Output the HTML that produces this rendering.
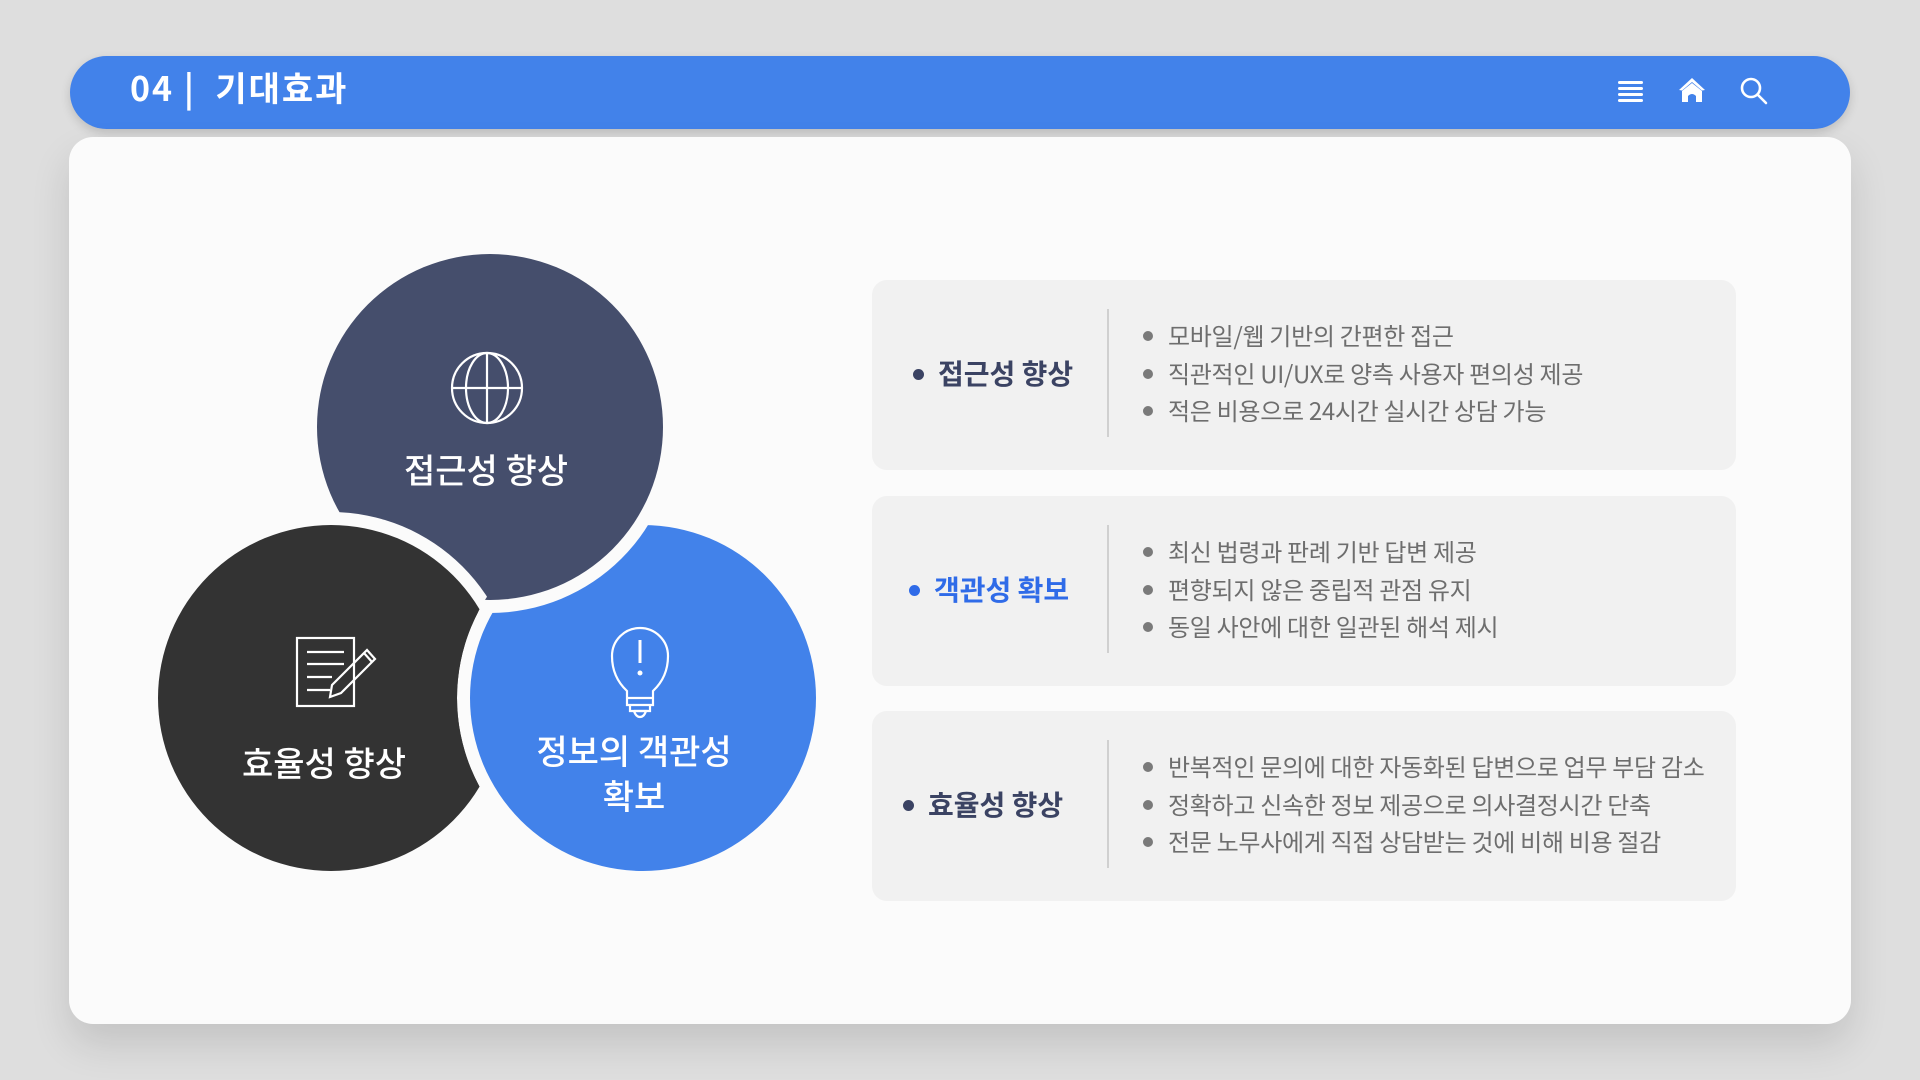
<!DOCTYPE html>
<html><head><meta charset="utf-8"><style>
*{margin:0;padding:0;box-sizing:border-box}
body{width:1920px;height:1080px;background:#dedede;font-family:"Liberation Sans","Noto Sans CJK KR",sans-serif;position:relative;overflow:hidden}
.hdr{position:absolute;left:70px;top:56px;width:1780px;height:73px;border-radius:37px;background:#4282ea;box-shadow:0 4px 10px rgba(0,0,0,.15)}
.hdr .t{position:absolute;left:60px;top:-6px;line-height:73px;color:#fff;font-size:34px;font-weight:bold;font-family:"Noto Sans CJK KR",sans-serif;letter-spacing:2px}
.card{position:absolute;left:69px;top:137px;width:1782px;height:887px;border-radius:24px;background:#fbfbfb;box-shadow:0 20px 40px rgba(0,0,0,.12)}
.ct{position:absolute;color:#fff;font-family:"Noto Sans CJK KR",sans-serif;font-size:34px;font-weight:500;text-align:center;line-height:45px}
.panel{position:absolute;left:872px;width:864px;height:190px;background:#f1f1f1;border-radius:15px}
.panel .div{position:absolute;left:235px;top:29px;width:2px;height:128px;background:#d0d0d0}
.panel .ti{position:absolute;top:-2px;line-height:190px;font-family:"Noto Sans CJK KR",sans-serif;font-weight:bold;font-size:28px;color:#3b4363}
.panel .ti:before{content:"";position:absolute;left:-25px;top:91px;width:11px;height:11px;border-radius:50%;background:currentColor}
.panel ul{position:absolute;left:296px;top:36px;list-style:none;font-family:"Noto Sans CJK KR",sans-serif;font-size:24px;color:#6e6e6e;letter-spacing:-0.3px}
.panel li{height:37.5px;line-height:37.5px;position:relative}
.panel li:before{content:"";position:absolute;left:-25px;top:15px;width:10px;height:10px;border-radius:50%;background:#7a7a7a}
</style></head><body>
<div class="hdr"><div class="t">04 | &nbsp;기대효과</div>
<svg style="position:absolute;left:1546px;top:20px" width="200" height="34" viewBox="0 0 200 34">
<g fill="#fff"><rect x="2" y="5" width="25" height="3" rx="1.5"/><rect x="2" y="11" width="25" height="3" rx="1.5"/><rect x="2" y="17" width="25" height="3" rx="1.5"/><rect x="2" y="23" width="25" height="3" rx="1.5"/>
<path d="M76 2 L63 14 L66 14.5 L76 6 L86 14.5 L89 14 Z"/><path d="M66 15 L76 7 L86 15 L86 26 L80 26 L80 20 Q76 16 72 20 L72 26 L66 26 Z"/></g>
<g fill="none" stroke="#fff" stroke-width="2.6"><circle cx="135" cy="12" r="9"/><path d="M141.5 18.5 L150 27" stroke-linecap="round"/></g>
</svg></div>
<div class="card"></div>
<svg style="position:absolute;left:0;top:0" width="900" height="1080">
<defs><mask id="m"><rect x="0" y="0" width="900" height="1080" fill="#fff"/><circle cx="643" cy="698" r="186" fill="#000"/></mask></defs>
<circle cx="331" cy="698" r="173" fill="#333333"/>
<circle cx="643" cy="698" r="186" fill="#fbfbfb"/>
<circle cx="643" cy="698" r="173" fill="#4282ea"/>
<circle cx="490" cy="427" r="186" fill="#fbfbfb"/>
<circle cx="490" cy="427" r="173" fill="#454e6c"/>
<g mask="url(#m)">
<circle cx="331" cy="698" r="186" fill="#fbfbfb"/>
<circle cx="331" cy="698" r="173" fill="#333333"/>
</g>
<g fill="none" stroke="#fff" stroke-width="2.2">
<circle cx="487" cy="388" r="35"/><ellipse cx="487" cy="388" rx="21" ry="35"/><path d="M487 353V423M452 388H522"/>
<rect x="297" y="638" width="57" height="68"/><path d="M307 652H344M307 664H344M307 677H332M307 690H330"/>
<path d="M332 685 L330 697 L341 693 L375 659 L367 650 Z M364 653 L372 662"/>
<path d="M627 691 Q612 677 612 656 A28 28 0 1 1 668 656 Q668 677 653 691 V698 H627 Z M627 698 H653 V705 H627 Z M630 705 H650 V711 H630 Z"/>
<path d="M634 711 H646 Q644 717 640 717 Q636 717 634 711"/>
</g>
<path d="M640 640V663" stroke="#fff" stroke-width="3"/><circle cx="640" cy="673" r="2.5" fill="#fff"/>
</svg>
<div class="ct" style="left:366px;top:446px;width:240px">접근성 향상</div>
<div class="ct" style="left:204px;top:739px;width:240px">효율성 향상</div>
<div class="ct" style="left:504px;top:727px;width:260px">정보의 객관성<br>확보</div>
<div class="panel" style="top:280px"><div class="ti" style="left:66px">접근성 향상</div><div class="div"></div>
<ul><li>모바일/웹 기반의 간편한 접근</li><li>직관적인 UI/UX로 양측 사용자 편의성 제공</li><li>적은 비용으로 24시간 실시간 상담 가능</li></ul></div>
<div class="panel" style="top:496px"><div class="ti" style="left:62px;color:#2f6be8">객관성 확보</div><div class="div"></div>
<ul><li>최신 법령과 판례 기반 답변 제공</li><li>편향되지 않은 중립적 관점 유지</li><li>동일 사안에 대한 일관된 해석 제시</li></ul></div>
<div class="panel" style="top:711px"><div class="ti" style="left:56px">효율성 향상</div><div class="div"></div>
<ul><li>반복적인 문의에 대한 자동화된 답변으로 업무 부담 감소</li><li>정확하고 신속한 정보 제공으로 의사결정시간 단축</li><li>전문 노무사에게 직접 상담받는 것에 비해 비용 절감</li></ul></div>
</body></html>
